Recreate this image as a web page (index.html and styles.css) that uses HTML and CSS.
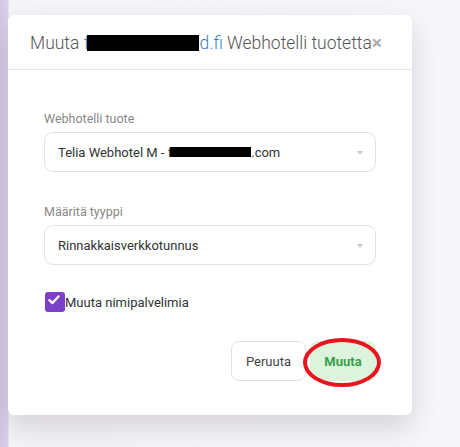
FILE: index.html
```html
<!DOCTYPE html>
<html lang="fi">
<head>
    <meta charset="UTF-8">
    <meta name="viewport" content="width=device-width, initial-scale=1.0">
    <title>Muuta Webhotelli tuotetta</title>
    <link rel="stylesheet" href="styles.css">
</head>
<body>
    <div class="backdrop">
        <div class="modal-content">
            <div class="modal-header">
                <h2>Muuta <span class="domain">f<span class="redact title-redact"></span>d.fi</span> Webhotelli tuotetta</h2>
                <span class="close">&times;</span>
            </div>
            <form class="modal-body">
                <label class="field-label">Webhotelli tuote</label>
                <div class="select">
                    <span>Telia Webhotel M - f<span class="redact select-redact"></span>.com</span>
                    <span class="caret"></span>
                </div>

                <label class="field-label">Määritä tyyppi</label>
                <div class="select">
                    <span>Rinnakkaisverkkotunnus</span>
                    <span class="caret"></span>
                </div>

                <label class="check">
                    <span class="box">
                        <svg width="12" height="10" viewBox="0 0 12 10"><path d="M1.5 5.2 L4.5 8 L10.5 1.5" fill="none" stroke="#fff" stroke-width="2.4" stroke-linecap="round" stroke-linejoin="round"/></svg>
                    </span>
                    Muuta nimipalvelimia
                </label>

                <div class="actions">
                    <button type="button" class="btn btn-cancel">Peruuta</button>
                    <button type="submit" class="btn btn-save">Muuta</button>
                </div>
            </form>
        </div>
    </div>
</body>
</html>
```

FILE: styles.css
```css
html, body {
    margin: 0;
    height: 100%;
}
body {
    font-family: Roboto, "Noto Sans", sans-serif;
    background: linear-gradient(90deg, #d2c6e6 0px, #dcd2ec 8px, #f5f4f7 9px, #f7f6f9 100%);
}
.backdrop {
    padding: 15px 0 0 8px;
}
.modal-content {
    width: 404px;
    height: 400px;
    box-sizing: border-box;
    background-color: #fff;
    border-radius: 6px;
    box-shadow: 0 12px 28px rgba(60, 50, 80, 0.18);
}
.modal-header {
    display: flex;
    align-items: center;
    justify-content: space-between;
    height: 54px;
    padding: 0 31px 0 22px;
    border-bottom: 1px solid #e6e6e6;
}
.modal-header h2 {
    margin: 2px 0 0 0;
    font-size: 17.5px;
    font-weight: 300;
    color: #555;
    white-space: nowrap;
}
.domain {
    color: #3d7fc4;
}
.redact {
    display: inline-block;
    background: #000;
    vertical-align: middle;
}
.title-redact {
    width: 112px;
    height: 16px;
    margin: -3px 0 0 -2px;
}
.select-redact {
    width: 81px;
    height: 10px;
    margin: -3px 0 0 -2px;
}
.close {
    color: #b0b0b0;
    font-size: 19px;
    font-weight: bold;
    margin-top: 1px;
}
.modal-body {
    display: flex;
    flex-direction: column;
    padding: 41px 36px 0 36px;
}
.field-label {
    font-size: 12.5px;
    color: #888;
    margin-bottom: 6px;
}
.select {
    display: flex;
    align-items: center;
    justify-content: space-between;
    height: 40px;
    box-sizing: border-box;
    border: 1px solid #e3e3e6;
    border-radius: 9px;
    padding: 0 12px 0 13px;
    font-size: 13px;
    color: #333;
    margin-bottom: 32px;
}
.caret {
    width: 0;
    height: 0;
    border-left: 3px solid transparent;
    border-right: 3px solid transparent;
    border-top: 4px solid #c8c8c8;
    margin-top: 2px;
}
.check {
    display: flex;
    align-items: center;
    font-size: 13px;
    color: #333;
    margin: -5px 0 0 1px;
}
.box {
    display: flex;
    align-items: center;
    justify-content: center;
    width: 20px;
    height: 20px;
    border-radius: 3px;
    background: #7b3fca;
}
.box svg {
    margin: -5px 0 0 -3px;
}
.actions {
    display: flex;
    justify-content: flex-end;
    gap: 4px;
    margin-top: 29px;
}
.btn {
    font-family: Roboto, "Noto Sans", sans-serif;
    font-size: 13px;
    height: 40px;
    border-radius: 8px;
    border: 1px solid transparent;
    cursor: pointer;
}
.btn-cancel {
    width: 75px;
    background: #fff;
    border-color: #e1e1e4;
    color: #444;
}
.btn-save {
    position: relative;
    width: 66px;
    background: #dcf4dc;
    color: #3a9e4c;
    font-weight: bold;
}
.btn-save::after {
    content: "";
    position: absolute;
    left: -8px;
    top: -4px;
    width: 70px;
    height: 41px;
    border: 4px solid #e8141e;
    border-radius: 50%;
}
```
